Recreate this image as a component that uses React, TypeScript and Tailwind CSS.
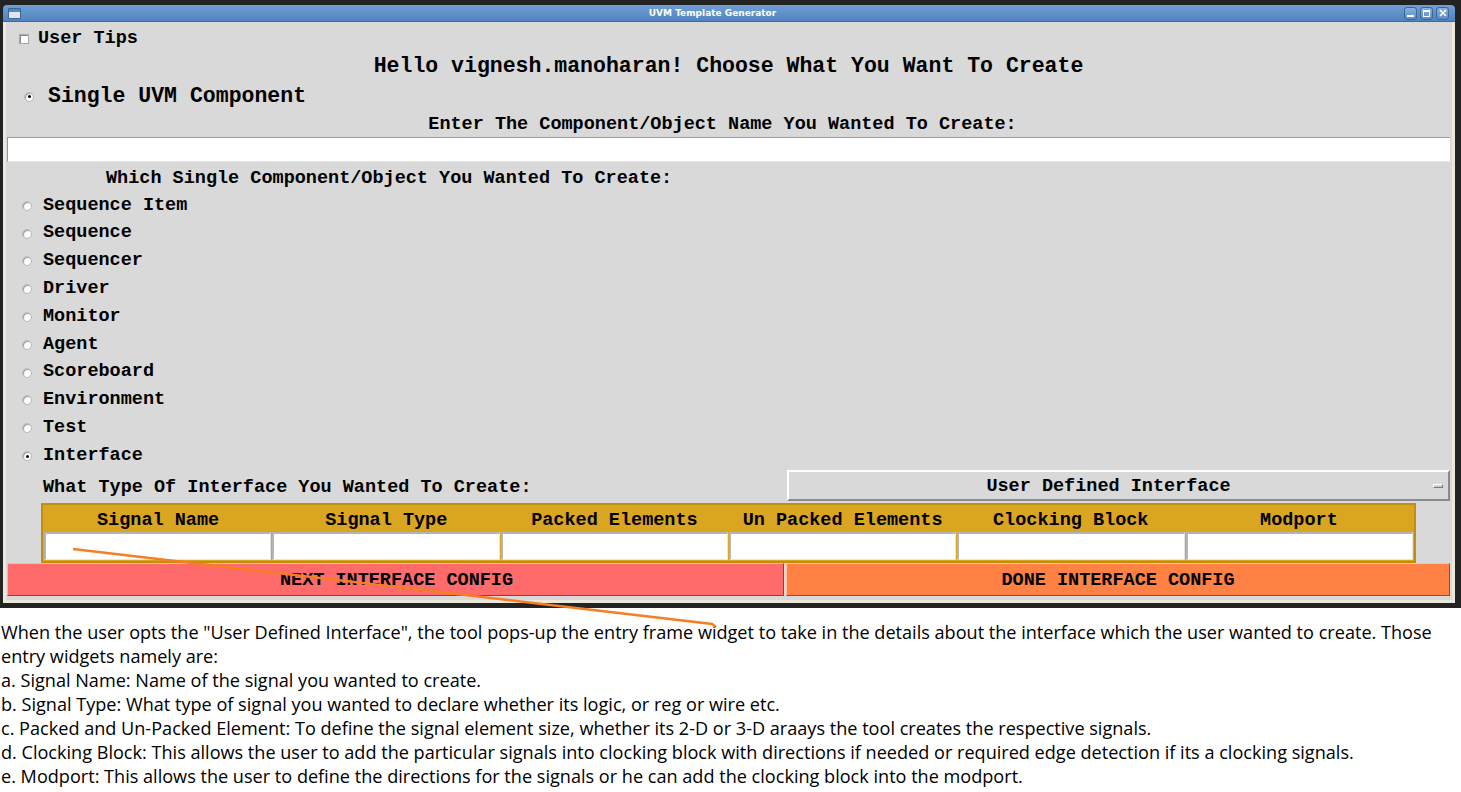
import React from "react";

const mono = { fontFamily: '"Liberation Mono", "Courier New", monospace' };

function Radio({ checked }: { checked?: boolean }) {
  return (
    <span className="relative inline-block w-[10px] h-[10px] rounded-full bg-white border border-[#b8b8b8] shadow-[inset_1px_1px_1px_#9a9a9a]">
      {checked && <span className="absolute left-[2.5px] top-[2.5px] w-[3px] h-[3px] rounded-full bg-black" />}
    </span>
  );
}

const items = [
  "Sequence Item",
  "Sequence",
  "Sequencer",
  "Driver",
  "Monitor",
  "Agent",
  "Scoreboard",
  "Environment",
  "Test",
  "Interface",
];

const headers = ["Signal Name", "Signal Type", "Packed Elements", "Un Packed Elements", "Clocking Block", "Modport"];

const lines = [
  'When the user opts the "User Defined Interface", the tool pops-up the entry frame widget to take in the details about the interface which the user wanted to create. Those',
  "entry widgets namely are:",
  "a. Signal Name: Name of the signal you wanted to create.",
  "b. Signal Type: What type of signal you wanted to declare whether its logic, or reg or wire etc.",
  "c. Packed and Un-Packed Element: To define the signal element size, whether its 2-D or 3-D araays the tool creates the respective signals.",
  "d. Clocking Block: This allows the user to add the particular signals into clocking block with directions if needed or required edge detection if its a clocking signals.",
  "e. Modport: This allows the user to define the directions for the signals or he can add the clocking block into the modport.",
];

export default function App() {
  return (
    <div className="relative w-[1461px] h-[792px] bg-white overflow-hidden">
      {/* dark desktop frame */}
      <div className="bg-[#232323] pt-[5px] pl-[3px] pr-[6px] pb-[5px]">
        <div className="flex flex-col rounded-t-[4px] overflow-hidden">
          {/* title bar */}
          <div className="relative h-[17px] flex items-center bg-gradient-to-b from-[#6f9fd4] to-[#4f83bf] border-b border-[#3d6a9e]">
            <div className="ml-[5px] w-[13px] h-[11px] border border-[#3d6594] bg-[#dfe6ee] rounded-[1px]">
              <div className="h-[3px] bg-[#5a86bb]" />
            </div>
            <div className="flex-1 text-center text-white font-bold text-[9px] leading-none" style={{ fontFamily: '"DejaVu Sans", sans-serif' }}>
              UVM Template Generator
            </div>
            <div className="flex gap-[3px] mr-[6px]">
              {[0, 1, 2].map((i) => (
                <div key={i} className="w-[13px] h-[13px] rounded-[3px] border border-[#3c6898] bg-gradient-to-b from-[#8ab1dd] to-[#5d8cc2] flex items-center justify-center">
                  {i === 0 && <div className="w-[7px] h-[2px] bg-white mt-[5px]" />}
                  {i === 1 && <div className="w-[7px] h-[7px] border border-white border-t-2" />}
                  {i === 2 && (
                    <svg width="8" height="8" viewBox="0 0 8 8">
                      <path d="M1 1L7 7M7 1L1 7" stroke="white" strokeWidth="1.6" />
                    </svg>
                  )}
                </div>
              ))}
            </div>
          </div>
          {/* content */}
          <div className="bg-[#d9d9d9] border-l-[3px] border-r-[3px] border-b-[3px] border-[#ece8dc] pt-[3px] pl-[1px] pr-[2px] pb-[4px] text-black font-bold text-[18.5px]" style={mono}>
            <div className="h-[24px] flex items-center pl-[12px] pt-[4px]">
              <span className="w-[10px] h-[10px] bg-white border border-[#a8a8a8] shadow-[inset_1px_1px_0_#8c8c8c]" />
              <span className="ml-[9px] leading-none">User Tips</span>
            </div>
            <div className="h-[32px] flex items-center justify-center pt-[4px] text-[21.5px] leading-none">
              Hello vignesh.manoharan! Choose What You Want To Create
            </div>
            <div className="h-[29px] flex items-center pl-[17px] pt-[2px]">
              <Radio checked />
              <span className="ml-[14px] text-[21.5px] leading-none">Single UVM Component</span>
            </div>
            <div className="h-[26px] flex items-center justify-center pr-[12px] pt-[4px] leading-none">
              Enter The Component/Object Name You Wanted To Create:
            </div>
            <div className="mt-[1px] h-[25px] bg-white border-t border-l border-[#9a9a9a] border-b border-r-0 border-b-[#e8e8e8]" />
            <div className="h-[28px] flex items-center pl-[99px] pt-[6px] leading-none">
              Which Single Component/Object You Wanted To Create:
            </div>
            {items.map((it, i) => (
              <div key={it} className="h-[27.8px] flex items-center pl-[15px] pt-[4px]">
                <Radio checked={i === 9} />
                <span className="ml-[11px] leading-none">{it}</span>
              </div>
            ))}
            <div className="h-[35px] flex items-start pt-[2px]">
              <div className="flex-1 h-[31px] flex items-center pl-[36px] pt-[6px] leading-none">What Type Of Interface You Wanted To Create:</div>
              <div className="relative w-[663px] h-[31px] flex items-center justify-center pt-[4px] border-t-2 border-l-2 border-white border-b-2 border-r-2 border-b-[#8a8a8a] border-r-[#8a8a8a] bg-[#d9d9d9] leading-none">
                <span className="pr-[20px]">User Defined Interface</span>
                <span className="absolute right-[5px] top-[12px] w-[10px] h-[4px] border-t border-l border-white border-b border-r border-b-[#777] border-r-[#777] bg-[#d0d0d0]" />
              </div>
            </div>
            <div className="h-[60px] flex items-start">
              <div className="ml-[34px] w-[1375px] h-[60px] border-[2px] border-[#c18e0e] bg-[#daa520] flex flex-col">
                <div className="h-[27px] grid grid-cols-6 px-[1px] pt-[5px] items-center leading-none">
                  {headers.map((h) => (
                    <div key={h} className="text-center">{h}</div>
                  ))}
                </div>
                <div className="h-[28px] grid grid-cols-6 gap-[1px] px-[1px]">
                  {headers.map((h) => (
                    <div key={h} className="bg-white border-t-2 border-l-2 border-[#b4b4b4] border-b border-r border-b-[#e6e6e6] border-r-[#e6e6e6]" />
                  ))}
                </div>
              </div>
            </div>
            <div className="h-[33px] flex gap-[2px] leading-none">
              <div className="w-[777px] flex items-center justify-center pt-[4px] bg-[#ff6a6a] border border-t-[#ffb0b0] border-l-[#ffb0b0] border-b-[#9a3c3c] border-r-[#9a3c3c] pl-[2px]">
                NEXT INTERFACE CONFIG
              </div>
              <div className="flex-1 flex items-center justify-center pt-[4px] bg-[#ff8143] border border-t-[#ffc0a0] border-l-[#ffc0a0] border-b-[#a04a20] border-r-[#a04a20]">
                DONE INTERFACE CONFIG
              </div>
            </div>
          </div>
        </div>
      </div>
      {/* description */}
      <div className="pt-[12px] text-black text-[18.1px] leading-[24px]" style={{ fontFamily: '"Open Sans", sans-serif' }}>
        {lines.map((l) => (
          <div key={l} className="whitespace-nowrap pl-[1px]">{l}</div>
        ))}
      </div>
      {/* annotation line */}
      <svg className="absolute left-0 top-0 pointer-events-none" width="1461" height="792">
        <path d="M73 549 L712 624 L716 627" stroke="#f57f22" strokeWidth="2.5" fill="none" />
      </svg>
    </div>
  );
}
